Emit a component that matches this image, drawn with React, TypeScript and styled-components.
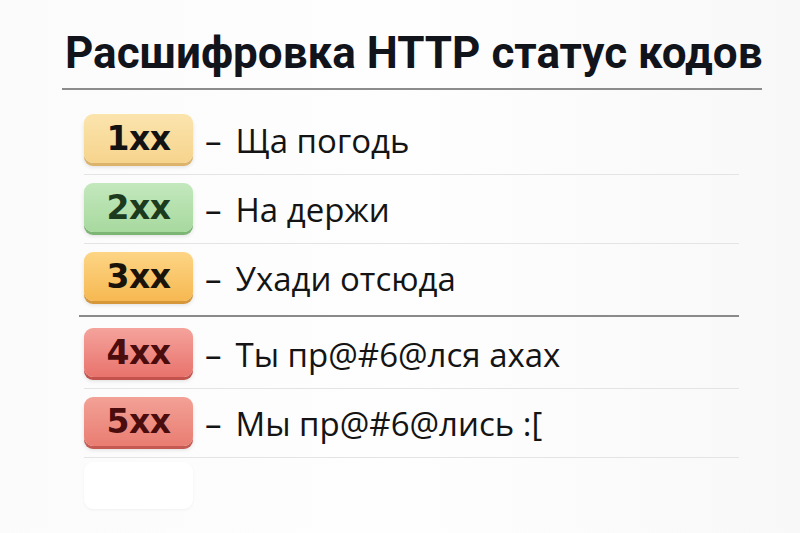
import React from "react";
import styled, { createGlobalStyle } from "styled-components";

const Global = createGlobalStyle`
  html, body { margin: 0; padding: 0; background: #fcfcfc; }
  body { width: 800px; height: 533px; overflow: hidden; }
`;

const Page = styled.div`
  width: 800px;
  height: 533px;
  box-sizing: border-box;
  padding: 26px 38px 0 62px;
  background: linear-gradient(90deg, #fbfbfb 0%, #fefefe 50%, #f8f8f8 100%);
`;

const Title = styled.h1`
  margin: 0;
  padding-left: 3px;
  height: 62px;
  font-family: Roboto, "Liberation Sans", sans-serif;
  font-weight: 700;
  font-size: 44px;
  line-height: 54px;
  color: #12141c;
  white-space: nowrap;
`;

const TitleRule = styled.div`
  height: 2px;
  width: 700px;
  background: #8c8c8c;
  margin-bottom: 24px;
`;

const List = styled.div`
  display: flex;
  flex-direction: column;
  margin-left: 22px;
  width: 655px;
`;

const Row = styled.div<{ $strong?: boolean; $afterStrong?: boolean }>`
  display: flex;
  align-items: center;
  height: 52px;
  padding: ${(p) => (p.$afterStrong ? 11 : 8)}px 0 ${(p) => (p.$strong ? 11 : 8)}px 0;
  border-bottom: ${(p) => (p.$strong ? "2px solid #8a8a8a" : "1px solid #e4e4e4")};
  margin-left: ${(p) => (p.$strong ? -5 : 0)}px;
  padding-left: ${(p) => (p.$strong ? 5 : 0)}px;
  &:first-child { padding-top: 0; }
`;

type Tone = { top: string; bottom: string; edge: string; ink: string };

const Badge = styled.div<{ $tone: Tone }>`
  width: 109px;
  height: 49px;
  margin-bottom: 3px;
  flex: none;
  box-sizing: border-box;
  border-radius: 9px;
  display: flex;
  align-items: center;
  justify-content: center;
  background: linear-gradient(180deg, ${(p) => p.$tone.top} 0%, ${(p) => p.$tone.bottom} 100%);
  box-shadow: 0 3px 0 ${(p) => p.$tone.edge}, 0 4px 4px rgba(0, 0, 0, 0.12);
  font-family: "DejaVu Sans", Verdana, sans-serif;
  font-weight: 700;
  font-size: 33px;
  color: ${(p) => p.$tone.ink};
  letter-spacing: -0.5px;
`;

const Dash = styled.span`
  font-family: "Open Sans", "Noto Sans", sans-serif;
  font-size: 33px;
  color: #141414;
  margin: 0 14px 0 12px;
`;

const Desc = styled.span`
  font-family: "Open Sans", "Noto Sans", sans-serif;
  font-size: 33px;
  color: #141414;
  white-space: nowrap;
`;

const EmptyRow = styled.div`
  padding-top: 4px;
`;

const Ghost = styled.div`
  width: 109px;
  height: 47px;
  border-radius: 9px;
  background: #ffffff;
  box-shadow: 0 1px 3px rgba(0, 0, 0, 0.05);
`;

const tones: Record<string, Tone> = {
  y: { top: "#fbe4ad", bottom: "#f6d48d", edge: "#dcb36a", ink: "#121212" },
  g: { top: "#c3e8bd", bottom: "#a7d99e", edge: "#7db674", ink: "#1c3a1e" },
  o: { top: "#fdd585", bottom: "#f6b851", edge: "#d6963a", ink: "#1a1309" },
  r: { top: "#f4a39c", bottom: "#e8736c", edge: "#c4524c", ink: "#4a0c0c" },
  s: { top: "#f3a196", bottom: "#e97d72", edge: "#c45a51", ink: "#4a0c0c" },
};

const rows = [
  { code: "1xx", text: "Ща погодь", tone: tones.y },
  { code: "2xx", text: "На держи", tone: tones.g },
  { code: "3xx", text: "Ухади отсюда", tone: tones.o, strong: true },
  { code: "4xx", text: "Ты пр@#6@лся ахах", tone: tones.r, afterStrong: true },
  { code: "5xx", text: "Мы пр@#6@лись :[", tone: tones.s },
];

export default function App() {
  return (
    <>
      <Global />
      <Page>
        <Title>Расшифровка HTTP статус кодов</Title>
        <TitleRule />
        <List>
          {rows.map((r) => (
            <Row key={r.code} $strong={r.strong} $afterStrong={r.afterStrong}>
              <Badge $tone={r.tone}>{r.code}</Badge>
              <Dash>–</Dash>
              <Desc>{r.text}</Desc>
            </Row>
          ))}
          <EmptyRow>
            <Ghost />
          </EmptyRow>
        </List>
      </Page>
    </>
  );
}
